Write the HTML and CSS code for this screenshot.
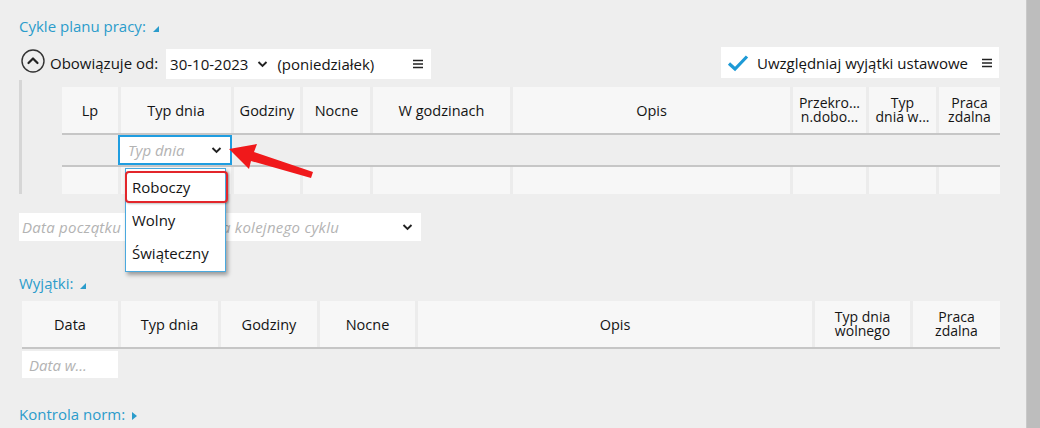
FILE: index.html
```html
<!DOCTYPE html>
<html lang="pl">
<head>
    <meta charset="UTF-8">
    <meta name="viewport" content="width=device-width, initial-scale=1.0">
    <title>Cykle planu pracy</title>
    <link rel="stylesheet" href="styles.css">
</head>
<body>

<div class="screen">
    <main class="content">

        <h3 class="section-title">Cykle planu pracy: <span class="tri tri-open"></span></h3>

        <div class="toolbar">
            <div class="valid-from">
                <svg class="collapse-icon" width="24" height="24" viewBox="0 0 24 24">
                    <circle cx="12" cy="12" r="11" fill="none" stroke="#333" stroke-width="1.4"/>
                    <polyline points="7.5,14 12,9.5 16.5,14" fill="none" stroke="#222" stroke-width="2.2" stroke-linecap="round" stroke-linejoin="round"/>
                </svg>
                <span class="label">Obowiązuje od:</span>
                <div class="date-box">
                    <span class="date-value">30-10-2023</span>
                    <svg class="chev" width="11" height="8" viewBox="0 0 11 8"><polyline points="1.5,2 5.5,6 9.5,2" fill="none" stroke="#222" stroke-width="1.9"/></svg>
                    <span class="weekday">(poniedziałek)</span>
                    <svg class="menu-icon" width="10" height="10" viewBox="0 0 10 10"><path d="M0 1.5H10M0 5H10M0 8.5H10" stroke="#222" stroke-width="1.4"/></svg>
                </div>
            </div>
            <div class="law-box">
                <svg class="check" width="22" height="18" viewBox="0 0 22 18"><polyline points="2,9.5 8,15 20,2.5" fill="none" stroke="#1d9ad6" stroke-width="3.2"/></svg>
                <span>Uwzględniaj wyjątki ustawowe</span>
                <svg class="menu-icon" width="10" height="10" viewBox="0 0 10 10"><path d="M0 1.5H10M0 5H10M0 8.5H10" stroke="#222" stroke-width="1.4"/></svg>
            </div>
        </div>

        <div class="cycle-table">
            <div class="grid cycle-cols head">
                <div class="hcell">Lp</div>
                <div class="hcell">Typ dnia</div>
                <div class="hcell">Godziny</div>
                <div class="hcell">Nocne</div>
                <div class="hcell">W godzinach</div>
                <div class="hcell">Opis</div>
                <div class="hcell two">Przekro...<br>n.dobo...</div>
                <div class="hcell two">Typ<br>dnia w...</div>
                <div class="hcell two">Praca<br>zdalna</div>
            </div>
            <div class="grid cycle-cols edit-row">
                <div></div>
                <div class="day-select">
                    <span class="placeholder">Typ dnia</span>
                    <svg class="chev" width="11" height="8" viewBox="0 0 11 8"><polyline points="1.5,2 5.5,6 9.5,2" fill="none" stroke="#222" stroke-width="1.9"/></svg>
                </div>
            </div>
            <div class="grid cycle-cols body-row">
                <div class="bcell"></div>
                <div class="bcell"></div>
                <div class="bcell"></div>
                <div class="bcell"></div>
                <div class="bcell"></div>
                <div class="bcell"></div>
                <div class="bcell"></div>
                <div class="bcell"></div>
                <div class="bcell"></div>
            </div>
        </div>

        <div class="next-cycle">
            <span class="placeholder">Data początku obowiązywania kolejnego cyklu</span>
            <svg class="chev" width="11" height="8" viewBox="0 0 11 8"><polyline points="1.5,2 5.5,6 9.5,2" fill="none" stroke="#222" stroke-width="1.9"/></svg>
        </div>

        <h3 class="section-title exceptions-title">Wyjątki: <span class="tri tri-open"></span></h3>

        <div class="grid except-cols head">
            <div class="hcell">Data</div>
            <div class="hcell">Typ dnia</div>
            <div class="hcell">Godziny</div>
            <div class="hcell">Nocne</div>
            <div class="hcell">Opis</div>
            <div class="hcell two">Typ dnia<br>wolnego</div>
            <div class="hcell two">Praca<br>zdalna</div>
        </div>
        <div class="date-filter"><span class="placeholder">Data w...</span></div>

        <h3 class="section-title norms-title">Kontrola norm: <span class="tri tri-closed"></span></h3>

    </main>
    <div class="scrollbar"></div>

    <!-- open dropdown of the "Typ dnia" editor -->
    <ul class="dropdown">
        <li>Roboczy</li>
        <li>Wolny</li>
        <li>Świąteczny</li>
    </ul>
    <div class="highlight"></div>
    <svg class="arrow" width="100" height="50" viewBox="220 135 100 50">
        <polygon points="229,149 257,144 254,152 313,172 311,178 251,161 249,169" fill="#f0191b"/>
    </svg>
</div>

</body>
</html>
```

FILE: styles.css
```css
body {
    margin: 0;
    background-color: #eeeeee;
    font-family: "Open Sans", "Noto Sans", sans-serif;
    font-size: 14px;
    color: #141414;
}
.screen {
    position: relative;
    display: flex;
    width: 1040px;
    height: 428px;
    overflow: hidden;
}
.content {
    flex: 1;
    padding-left: 19px;
}
.scrollbar {
    width: 13px;
    background-color: #bdbdbd;
    border-left: 1px solid #c9c9c9;
}
.section-title {
    margin: 16px 0 0 0;
    height: 20px;
    line-height: 20px;
    font-size: 15px;
    font-weight: normal;
    color: #2b9ccb;
    display: flex;
    align-items: center;
}
.tri {
    display: inline-block;
    width: 0;
    height: 0;
    margin-left: 7px;
}
.tri-open {
    border-left: 6px solid transparent;
    border-bottom: 6px solid #2b9ccb;
    margin-top: 5px;
}
.tri-closed {
    border-top: 4px solid transparent;
    border-bottom: 4px solid transparent;
    border-left: 5px solid #2b9ccb;
    margin-top: 3px;
}
.toolbar {
    display: flex;
    justify-content: space-between;
    align-items: center;
    width: 980px;
    height: 31px;
    margin-top: 11px;
}
.valid-from {
    display: flex;
    align-items: center;
}
.collapse-icon {
    margin-left: 2px;
    margin-top: -3px;
}
.label {
    margin-left: 5px;
    font-size: 15px;
}
.date-box {
    display: flex;
    align-items: center;
    width: 265px;
    height: 30px;
    margin-left: 8px;
    margin-top: 2px;
    padding: 0 0 0 4px;
    box-sizing: border-box;
    background-color: white;
    font-size: 15px;
}
.date-box .chev {
    margin: 1px 9px 0 9px;
}
.date-box .menu-icon {
    margin-left: auto;
    margin-right: 8px;
}
.law-box {
    display: flex;
    align-items: center;
    width: 278px;
    height: 31px;
    padding-left: 6px;
    box-sizing: border-box;
    background-color: white;
    font-size: 15px;
}
.law-box .check {
    margin-right: 8px;
}
.law-box .menu-icon {
    margin-left: auto;
    margin-right: 7px;
}

/* tables */
.grid {
    display: grid;
}
.cycle-cols {
    grid-template-columns: 59px 113px 69px 70px 140px 280px 76px 70px 61px;
}
.except-cols {
    grid-template-columns: 99px 100px 99px 98px 397px 98px 87px;
}
.head {
    height: 48px;
    border-bottom: 2px solid #c6c6c6;
    box-sizing: border-box;
    font-size: 14.5px;
}
.hcell {
    display: flex;
    align-items: center;
    justify-content: center;
    text-align: center;
    background-color: #f7f7f7;
    border-right: 3px solid #ececec;
}
.hcell:last-child {
    border-right: none;
}
.hcell.two {
    line-height: 14px;
    font-size: 14px;
}
.cycle-table {
    margin-top: 2px;
    padding: 7px 0 0 40px;
    border-left: 3px solid #d6d6d6;
    width: 938px;
}
.edit-row {
    height: 32px;
    border-bottom: 2px solid #c6c6c6;
    box-sizing: border-box;
}
.day-select {
    display: flex;
    align-items: center;
    justify-content: space-between;
    width: 114px;
    height: 30px;
    margin-left: -3px;
    padding: 0 8px 0 8px;
    box-sizing: border-box;
    border: 2px solid #1f9de0;
    background-color: white;
}
.placeholder {
    font-style: italic;
    color: #b3b3b3;
    font-size: 15px;
}
.body-row {
    height: 27px;
}
.bcell {
    background-color: #f7f7f7;
    border-right: 3px solid #ececec;
}
.bcell:last-child {
    border-right: none;
}
.next-cycle {
    display: flex;
    align-items: center;
    justify-content: space-between;
    width: 402px;
    height: 28px;
    margin-top: 19px;
    padding: 0 8px 0 3px;
    box-sizing: border-box;
    background-color: white;
}
.next-cycle .placeholder {
    letter-spacing: 0.25px;
}
.exceptions-title {
    margin-top: 32px;
}
.except-cols.head {
    margin: 8px 0 0 3px;
    width: 978px;
}
.date-filter {
    display: flex;
    align-items: center;
    width: 96px;
    height: 27px;
    margin: 2px 0 0 3px;
    padding-left: 7px;
    box-sizing: border-box;
    background-color: white;
}
.norms-title {
    margin-top: 26px;
}

/* popup and annotation overlays */
.dropdown {
    position: absolute;
    left: 125px;
    top: 168px;
    width: 101px;
    height: 104px;
    margin: 0;
    padding: 2px 0 0 0;
    box-sizing: border-box;
    list-style: none;
    background-color: white;
    border: 1px solid #4aa9de;
    box-shadow: 2px 3px 4px rgba(0, 0, 0, 0.35);
    font-size: 15px;
}
.dropdown li {
    height: 33px;
    line-height: 33px;
    padding-left: 6px;
}
.highlight {
    position: absolute;
    left: 125px;
    top: 171px;
    width: 103px;
    height: 32px;
    box-sizing: border-box;
    border: 2px solid #e3262b;
    border-radius: 4px;
    box-shadow: 1px 1px 2px rgba(0, 0, 0, 0.25);
}
.arrow {
    position: absolute;
    left: 220px;
    top: 135px;
}
```
